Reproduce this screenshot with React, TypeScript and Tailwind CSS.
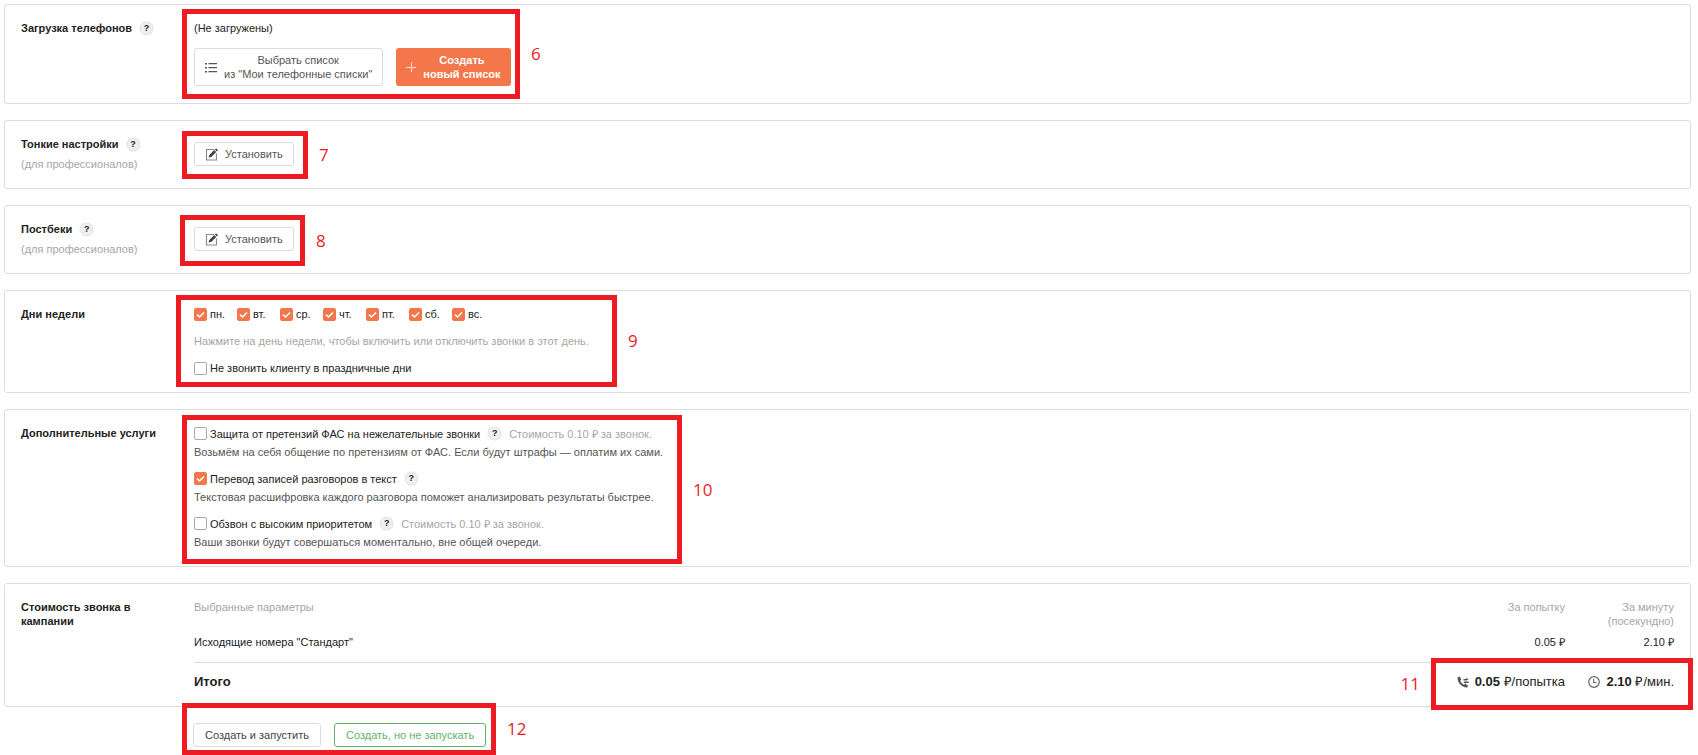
import type { ReactNode } from 'react'
import clsx from 'clsx'

const days = ['пн.', 'вт.', 'ср.', 'чт.', 'пт.', 'сб.', 'вс.']

const services = [
  {
    id: 'fas',
    title: 'Защита от претензий ФАС на нежелательные звонки',
    price: 'Стоимость 0.10 ₽ за звонок.',
    text: 'Возьмём на себя общение по претензиям от ФАС. Если будут штрафы — оплатим их сами.',
    checked: false,
  },
  {
    id: 'transcript',
    title: 'Перевод записей разговоров в текст',
    text: 'Текстовая расшифровка каждого разговора поможет анализировать результаты быстрее.',
    checked: true,
  },
  {
    id: 'priority',
    title: 'Обзвон с высоким приоритетом',
    price: 'Стоимость 0.10 ₽ за звонок.',
    text: 'Ваши звонки будут совершаться моментально, вне общей очереди.',
    checked: false,
  },
]

function Help() {
  return (
    <button
      type="button"
      aria-label="Справка"
      className="flex size-[13px] shrink-0 items-center justify-center rounded-full bg-[#efefef] text-[9px] leading-none font-bold text-[#222] shadow-[0_0_1px_#aaa]"
    >
      ?
    </button>
  )
}

// Numbered red frame drawn over a block
function Callout({ number, className, left }: { number: number; className: string; left?: boolean }) {
  return (
    <div className={clsx('pointer-events-none absolute z-10 flex items-center border-5 border-[#ed1c24]', className)}>
      <span
        className={clsx(
          'absolute font-["Open_Sans",sans-serif] text-[17px] leading-5 text-[#ed1c24]',
          left ? 'right-full mr-4' : 'left-full ml-4'
        )}
      >
        {number}
      </span>
    </div>
  )
}

function Card({ title, note, help, children }: { title: string; note?: string; help?: boolean; children: ReactNode }) {
  return (
    <section className="flex rounded-[3px] border border-[#dcdcdc] px-4 pt-4 pb-[17px]">
      <div className="w-[173px] shrink-0">
        <div className="flex items-center gap-2">
          <h2 className="max-w-[140px] font-bold">{title}</h2>
          {help && <Help />}
        </div>
        {note && <p className="mt-1.5 text-[#a6a6a6]">{note}</p>}
      </div>
      <div className="relative flex min-w-0 flex-1 flex-col justify-center">{children}</div>
    </section>
  )
}

function Checkbox({ label, checked }: { label: string; checked?: boolean }) {
  return (
    <label className="flex items-center gap-[3px]">
      <span className="relative flex size-[13px] shrink-0">
        <input
          type="checkbox"
          defaultChecked={checked}
          className="peer size-[13px] appearance-none rounded-[2px] border border-[#aaa] bg-white checked:border-[#f4774b] checked:bg-[#f4774b]"
        />
        <svg viewBox="0 0 13 13" className="pointer-events-none absolute inset-0 hidden size-[13px] peer-checked:block">
          <path d="M3 6.6 5.5 9 10 4.5" fill="none" stroke="#fff" strokeWidth="1.6" />
        </svg>
      </span>
      {label}
    </label>
  )
}

function ListIcon() {
  return (
    <svg viewBox="0 0 12 11" className="h-[11px] w-3 shrink-0" fill="#555">
      <path d="M0 1h2v1.6H0zM0 5h2v1.6H0zM0 9h2v1.6H0zM3.5 1H12v1.2H3.5zM3.5 5H12v1.2H3.5zM3.5 9H12v1.2H3.5z" />
    </svg>
  )
}

function EditIcon() {
  return (
    <svg viewBox="0 0 13 13" className="size-[13px] shrink-0">
      <path d="M9 1.5H1.5v10.5h10V5.5" fill="none" stroke="#888" strokeWidth="1.1" />
      <path d="M3.6 9.6 4.3 7 9.2 2.1 11.2 4.1 6.3 9zM9.9 1.4 11.1.3 13 2.2 11.9 3.4z" fill="#444" />
    </svg>
  )
}

function PhoneIcon() {
  return (
    <svg viewBox="0 0 12 12" className="size-3 shrink-0" fill="#555">
      <path d="M.6 1.3 2.7.6 4.3 3.4 3.3 4.8C4 6.5 5.3 7.9 7 8.7L8.4 7.7 11 9.4 10.3 11.4C5 11.8.2 7 .6 1.3z" />
      <path d="M6.5 3h2.7V1.8L11.6 3.6 9.2 4.4H6.5zM11.6 5.6H8.6V5L6.3 6.4l2.3 1.4V7h3z" />
    </svg>
  )
}

function ClockIcon() {
  return (
    <svg viewBox="0 0 12 12" className="size-3 shrink-0" fill="none" stroke="#666">
      <circle cx="6" cy="6" r="5.3" strokeWidth="1.2" />
      <path d="M5.7 2.8v3.7h2.8" strokeWidth="1.1" />
    </svg>
  )
}

function SetButton() {
  return (
    <button type="button" className="flex h-6 w-fit items-center gap-[7px] rounded-[3px] border border-[#dcdcdc] px-2.5 text-[#555]">
      <EditIcon />
      Установить
    </button>
  )
}

export default function App() {
  return (
    <main className='flex flex-col gap-4 overflow-hidden bg-white pt-1 pr-[7px] pb-[9px] pl-1 font-["Liberation_Sans",Arial,sans-serif] text-[11px] leading-[14px] text-[#222]'>
      <Card title="Загрузка телефонов" help>
        <p>(Не загружены)</p>
        <div className="mt-[13px] flex gap-[13px]">
          <button type="button" className="flex h-[38px] items-center gap-[7px] rounded-[3px] border border-[#dcdcdc] px-2.5 text-[#555]">
            <ListIcon />
            <span>
              Выбрать список
              <br />
              из "Мои телефонные списки"
            </span>
          </button>
          <button type="button" className="flex h-[38px] items-center gap-[7px] rounded-[3px] bg-[#f4774b] px-2.5 font-bold text-white">
            <svg viewBox="0 0 10 10" className="size-2.5 shrink-0" stroke="#fff" strokeWidth="0.8">
              <path d="M0 5.5h10M5.5 0v10" />
            </svg>
            <span>
              Создать
              <br />
              новый список
            </span>
          </button>
        </div>
        <Callout number={6} className="-top-3 -left-3 h-[90px] w-[338px]" />
      </Card>

      <Card title="Тонкие настройки" note="(для профессионалов)" help>
        <SetButton />
        <Callout number={7} className="-top-1.5 -left-3 h-12 w-[126px]" />
      </Card>

      <Card title="Постбеки" note="(для профессионалов)" help>
        <SetButton />
        <Callout number={8} className="-top-[7px] -left-3.5 h-[51px] w-[125px]" />
      </Card>

      <Card title="Дни недели">
        <div className="flex">
          {days.map((day) => (
            <div key={day} className="w-[43px]">
              <Checkbox label={day} checked />
            </div>
          ))}
        </div>
        <p className="mt-[13px] text-[#a6a6a6]">Нажмите на день недели, чтобы включить или отключить звонки в этот день.</p>
        <div className="mt-[13px] flex">
          <Checkbox label="Не звонить клиенту в праздничные дни" />
        </div>
        <Callout number={9} className="-top-3 -left-[18px] h-[92px] w-[441px]" />
      </Card>

      <Card title="Дополнительные услуги">
        <div className="flex flex-col gap-3">
          {services.map((service) => (
            <div key={service.id}>
              <div className="flex h-[15px] items-center gap-2">
                <Checkbox label={service.title} checked={service.checked} />
                <Help />
                {service.price && <span className="text-[#a6a6a6]">{service.price}</span>}
              </div>
              <p className="mt-1 text-[#555]">{service.text}</p>
            </div>
          ))}
        </div>
        <Callout number={10} className="-top-[11px] -left-3 h-[149px] w-[500px]" />
      </Card>

      <Card title="Стоимость звонка в кампании">
        <table className="w-full">
          <thead className="text-[#a6a6a6]">
            <tr className="align-top">
              <th className="text-left font-normal">Выбранные параметры</th>
              <th className="w-[160px] text-right font-normal">За попытку</th>
              <th className="w-[109px] text-right font-normal">
                За минуту
                <br />
                (посекундно)
              </th>
            </tr>
          </thead>
          <tbody>
            <tr className="border-b border-[#dcdcdc] text-right">
              <td className="pt-[7px] pb-[13px] text-left">Исходящие номера "Стандарт"</td>
              <td className="pt-[7px] pb-[13px]">0.05 ₽</td>
              <td className="pt-[7px] pb-[13px]">2.10 ₽</td>
            </tr>
          </tbody>
          <tfoot className="text-[13px]">
            <tr>
              <th className="pt-3 text-left font-bold">Итого</th>
              <td className="pt-3">
                <div className="flex items-center justify-end gap-1.5">
                  <PhoneIcon />
                  <span><b>0.05</b> ₽/попытка</span>
                </div>
              </td>
              <td className="pt-3">
                <div className="flex items-center justify-end gap-1.5">
                  <ClockIcon />
                  <span><b>2.10</b> ₽/мин.</span>
                </div>
              </td>
            </tr>
          </tfoot>
        </table>
        <Callout number={11} left className="-right-[19px] -bottom-[21px] h-[52px] w-[262px]" />
      </Card>

      <div className="relative ml-[189px] flex gap-[13px]">
        <button type="button" className="h-6 rounded-[3px] border border-[#dcdcdc] px-[11px] text-[#444]">Создать и запустить</button>
        <button type="button" className="h-6 rounded-[3px] border border-[#5fb36a] px-[11px] text-[#5fb36a]">Создать, но не запускать</button>
        <Callout number={12} className="-top-5 -left-[11px] h-[52px] w-[314px]" />
      </div>
    </main>
  )
}
